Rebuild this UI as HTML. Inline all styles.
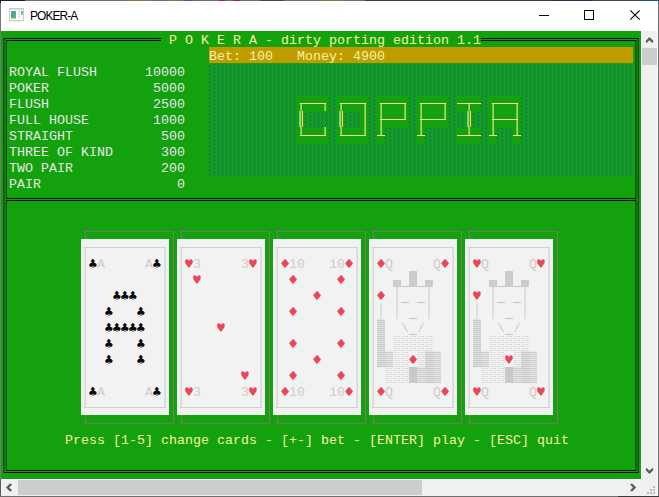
<!DOCTYPE html>
<html lang="en">
<head>
<meta charset="utf-8">
<title>POKER-A</title>
<style>
html,body{margin:0;padding:0;background:#fff;}
#win{position:relative;width:659px;height:497px;overflow:hidden;background:#fff;font-family:"Liberation Sans",sans-serif;}
#edgeL{position:absolute;left:0;top:0;width:1px;height:497px;background:linear-gradient(to bottom,#222 0,#222 3px,#7b747f 3px,#7b747f 479px,#5e5e62 479px);}
#edgeT{position:absolute;left:0;top:0;width:659px;height:1px;background:#707070;}
#edgeT i{position:absolute;top:0;height:1px;}
#edgeR{position:absolute;left:657px;top:1px;width:2px;height:496px;background:linear-gradient(to right,#fff 0,#fff 1px,#6a6a6a 1px);}
#edgeB{position:absolute;left:0;top:496px;width:659px;height:1px;background:linear-gradient(to right,#707070 0,#707070 618px,#3a3a3a 618px);}
#title{position:absolute;left:30px;top:9px;font-size:12px;line-height:14px;letter-spacing:-0.95px;color:#000;white-space:pre;}
#con{position:absolute;left:1px;top:31px;width:640px;height:448px;background:#13A10E;overflow:hidden;font-family:"Liberation Mono",monospace;font-size:13.33px;line-height:16px;}
#con svg{position:absolute;left:0;top:0;}
.t,.s{position:absolute;white-space:pre;height:16px;line-height:16px;margin-top:1.5px;}
.s{font-family:"DejaVu Sans Mono","DejaVu Sans",monospace;font-size:13px;width:8px;text-align:center;transform-origin:4px 11.5px;}
.c{transform:scale(1,1.13);}
.h{transform:scale(1,1.13);}
.d{transform:scale(1.3,1.18);}
#vs{position:absolute;left:641px;top:31px;width:17px;height:448px;background:#F0F0F0;box-shadow:inset 1px 0 0 #fff;}
#vs i{position:absolute;left:1px;top:17px;width:15px;height:17px;background:#CDCDCD;}
#hs{position:absolute;left:1px;top:479px;width:640px;height:17px;background:#F0F0F0;box-shadow:inset 0 1px 0 #fff;}
#hs i{position:absolute;left:17px;top:1px;width:404px;height:15px;background:#CDCDCD;}
#grip{position:absolute;left:641px;top:479px;width:17px;height:17px;background:#F0F0F0;}
.ic{position:absolute;left:0;top:0;}
</style>
</head>
<body>
<div id="win">
<div id="title">POKER-A</div>
<svg class="ic" width="659" height="497" viewBox="0 0 659 497">
<defs><linearGradient id="ig" x1="0" y1="0" x2="0.35" y2="1"><stop offset="0" stop-color="#6392C8"/><stop offset="1" stop-color="#55B864"/></linearGradient>
<linearGradient id="ig2" x1="0" y1="0" x2="0" y2="1"><stop offset="0" stop-color="#6C9ACB"/><stop offset="0.7" stop-color="#7CC88A"/><stop offset="1" stop-color="#D8EEDA"/></linearGradient></defs>
<rect x="9.5" y="8.5" width="14" height="12" fill="#fff" stroke="#C9CCD3"/>
<rect x="10" y="9" width="13" height="1" fill="#DCDEE3"/>
<rect x="9" y="21" width="15" height="1" fill="#EEEFF1"/>
<rect x="11" y="11" width="5" height="7.5" fill="url(#ig)"/>
<rect x="18" y="11" width="2" height="7.5" fill="#E4E4E6"/>
<rect x="21" y="11" width="2" height="4.5" fill="url(#ig2)"/>
<rect x="539" y="15" width="10" height="1" fill="#000"/>
<rect x="584.5" y="10.5" width="9" height="9" fill="none" stroke="#000"/>
<path d="M630.3 10.3 L639.7 19.7 M639.7 10.3 L630.3 19.7" stroke="#000" stroke-width="1.1" fill="none"/>
</svg>
<div id="con">
<svg width="640" height="448" viewBox="0 0 640 448" shape-rendering="crispEdges">
<defs><pattern id="dotb" width="8" height="4" patternUnits="userSpaceOnUse"><rect x="1" y="1" width="1" height="1" fill="#1662B8"/><rect x="3" y="1" width="1" height="1" fill="#20A070"/><rect x="4" y="1" width="1" height="1" fill="#0F5E48"/><rect x="6" y="1" width="1" height="1" fill="#1866B2"/><rect x="0" y="3" width="1" height="1" fill="#0F5E50"/><rect x="2" y="3" width="1" height="1" fill="#1868BA"/><rect x="5" y="3" width="1" height="1" fill="#1662B2"/><rect x="7" y="3" width="1" height="1" fill="#20A070"/></pattern><pattern id="sh1" width="8" height="4" patternUnits="userSpaceOnUse"><rect x="1" y="1" width="1" height="1" fill="#D3D3D8"/><rect x="2" y="1" width="1" height="1" fill="#EAEAEA"/><rect x="3" y="1" width="1" height="1" fill="#DEDEE0"/><rect x="4" y="1" width="1" height="1" fill="#DEDEE0"/><rect x="5" y="1" width="1" height="1" fill="#EAEAEA"/><rect x="6" y="1" width="1" height="1" fill="#D3D3D8"/><rect x="0" y="3" width="1" height="1" fill="#DEDEE0"/><rect x="1" y="3" width="1" height="1" fill="#EAEAEA"/><rect x="2" y="3" width="1" height="1" fill="#D3D3D8"/><rect x="3" y="3" width="1" height="1" fill="#EAEAEA"/><rect x="4" y="3" width="1" height="1" fill="#EAEAEA"/><rect x="5" y="3" width="1" height="1" fill="#D3D3D8"/><rect x="6" y="3" width="1" height="1" fill="#EAEAEA"/><rect x="7" y="3" width="1" height="1" fill="#DEDEE0"/></pattern><pattern id="sh2" width="8" height="2" patternUnits="userSpaceOnUse"><rect x="0" y="0" width="8" height="1" fill="#E8E8E8"/><rect x="0" y="1" width="8" height="1" fill="#CBCBCF"/></pattern><pattern id="sh3" width="8" height="2" patternUnits="userSpaceOnUse"><rect x="0" y="0" width="8" height="1" fill="#E3E3E3"/><rect x="0" y="1" width="8" height="1" fill="#C6C6CA"/></pattern></defs>
<rect x="2" y="7" width="1" height="435" fill="#105F10"/>
<rect x="634" y="9" width="1" height="431" fill="#105F10"/>
<rect x="3" y="7" width="1" height="435" fill="#126C12"/>
<rect x="635" y="9" width="1" height="431" fill="#126C12"/>
<rect x="4" y="9" width="1" height="431" fill="#147A14"/>
<rect x="636" y="7" width="1" height="435" fill="#147A14"/>
<rect x="5" y="9" width="1" height="431" fill="#0F4812"/>
<rect x="637" y="7" width="1" height="435" fill="#0F4812"/>
<rect x="3" y="7" width="157" height="1" fill="#0C0C0C"/>
<rect x="5" y="9" width="155" height="1" fill="#0C0C0C"/>
<rect x="480" y="7" width="157" height="1" fill="#0C0C0C"/>
<rect x="480" y="9" width="155" height="1" fill="#0C0C0C"/>
<rect x="5" y="167" width="630" height="1" fill="#0C0C0C"/>
<rect x="5" y="169" width="630" height="1" fill="#0C0C0C"/>
<rect x="4" y="168" width="2" height="1" fill="#15931A"/>
<rect x="635" y="168" width="2" height="1" fill="#15931A"/>
<rect x="5" y="439" width="630" height="1" fill="#0C0C0C"/>
<rect x="3" y="441" width="634" height="1" fill="#0C0C0C"/>
<rect x="208" y="16" width="424" height="16" fill="#C19C00"/>
<rect x="208" y="32" width="424" height="112" fill="url(#dotb)"/>
<rect x="295" y="64" width="9" height="16" fill="#13A10E"/>
<rect x="303" y="64" width="9" height="16" fill="#13A10E"/>
<rect x="311" y="64" width="9" height="16" fill="#13A10E"/>
<rect x="319" y="64" width="9" height="16" fill="#13A10E"/>
<rect x="295" y="80" width="9" height="16" fill="#13A10E"/>
<rect x="295" y="96" width="9" height="16" fill="#13A10E"/>
<rect x="303" y="96" width="9" height="16" fill="#13A10E"/>
<rect x="311" y="96" width="9" height="16" fill="#13A10E"/>
<rect x="319" y="96" width="9" height="16" fill="#13A10E"/>
<rect x="335" y="64" width="9" height="16" fill="#13A10E"/>
<rect x="343" y="64" width="9" height="16" fill="#13A10E"/>
<rect x="351" y="64" width="9" height="16" fill="#13A10E"/>
<rect x="359" y="64" width="9" height="16" fill="#13A10E"/>
<rect x="335" y="80" width="9" height="16" fill="#13A10E"/>
<rect x="359" y="80" width="9" height="16" fill="#13A10E"/>
<rect x="335" y="96" width="9" height="16" fill="#13A10E"/>
<rect x="343" y="96" width="9" height="16" fill="#13A10E"/>
<rect x="351" y="96" width="9" height="16" fill="#13A10E"/>
<rect x="359" y="96" width="9" height="16" fill="#13A10E"/>
<rect x="375" y="64" width="9" height="16" fill="#13A10E"/>
<rect x="383" y="64" width="9" height="16" fill="#13A10E"/>
<rect x="391" y="64" width="9" height="16" fill="#13A10E"/>
<rect x="399" y="64" width="9" height="16" fill="#13A10E"/>
<rect x="375" y="80" width="9" height="16" fill="#13A10E"/>
<rect x="383" y="80" width="9" height="16" fill="#13A10E"/>
<rect x="391" y="80" width="9" height="16" fill="#13A10E"/>
<rect x="399" y="80" width="9" height="16" fill="#13A10E"/>
<rect x="375" y="96" width="9" height="16" fill="#13A10E"/>
<rect x="415" y="64" width="9" height="16" fill="#13A10E"/>
<rect x="423" y="64" width="9" height="16" fill="#13A10E"/>
<rect x="431" y="64" width="9" height="16" fill="#13A10E"/>
<rect x="439" y="64" width="9" height="16" fill="#13A10E"/>
<rect x="415" y="80" width="9" height="16" fill="#13A10E"/>
<rect x="423" y="80" width="9" height="16" fill="#13A10E"/>
<rect x="431" y="80" width="9" height="16" fill="#13A10E"/>
<rect x="439" y="80" width="9" height="16" fill="#13A10E"/>
<rect x="415" y="96" width="9" height="16" fill="#13A10E"/>
<rect x="455" y="64" width="9" height="16" fill="#13A10E"/>
<rect x="463" y="64" width="9" height="16" fill="#13A10E"/>
<rect x="471" y="64" width="9" height="16" fill="#13A10E"/>
<rect x="463" y="80" width="9" height="16" fill="#13A10E"/>
<rect x="455" y="96" width="9" height="16" fill="#13A10E"/>
<rect x="463" y="96" width="9" height="16" fill="#13A10E"/>
<rect x="471" y="96" width="9" height="16" fill="#13A10E"/>
<rect x="487" y="64" width="9" height="16" fill="#13A10E"/>
<rect x="495" y="64" width="9" height="16" fill="#13A10E"/>
<rect x="503" y="64" width="9" height="16" fill="#13A10E"/>
<rect x="511" y="64" width="9" height="16" fill="#13A10E"/>
<rect x="487" y="80" width="9" height="16" fill="#13A10E"/>
<rect x="495" y="80" width="9" height="16" fill="#13A10E"/>
<rect x="503" y="80" width="9" height="16" fill="#13A10E"/>
<rect x="511" y="80" width="9" height="16" fill="#13A10E"/>
<rect x="487" y="96" width="9" height="16" fill="#13A10E"/>
<rect x="511" y="96" width="9" height="16" fill="#13A10E"/>
<rect x="299" y="72" width="1" height="8" fill="#50C890"/>
<rect x="300" y="72" width="1" height="8" fill="#D8C830"/>
<rect x="299" y="72" width="5" height="1" fill="#F9F1A5"/>
<rect x="304" y="72" width="8" height="1" fill="#F9F1A5"/>
<rect x="312" y="72" width="8" height="1" fill="#F9F1A5"/>
<rect x="323" y="72" width="1" height="8" fill="#50C890"/>
<rect x="324" y="72" width="1" height="8" fill="#D8C830"/>
<rect x="320" y="72" width="5" height="1" fill="#F9F1A5"/>
<rect x="298" y="80" width="1" height="16" fill="#60D0A0"/>
<rect x="299" y="80" width="1" height="16" fill="#D8C838"/>
<rect x="300" y="80" width="1" height="16" fill="#20B070"/>
<rect x="301" y="80" width="1" height="16" fill="#FFD850"/>
<rect x="299" y="96" width="1" height="9" fill="#50C890"/>
<rect x="300" y="96" width="1" height="9" fill="#D8C830"/>
<rect x="299" y="104" width="5" height="1" fill="#F9F1A5"/>
<rect x="304" y="104" width="8" height="1" fill="#F9F1A5"/>
<rect x="312" y="104" width="8" height="1" fill="#F9F1A5"/>
<rect x="323" y="96" width="1" height="9" fill="#50C890"/>
<rect x="324" y="96" width="1" height="9" fill="#D8C830"/>
<rect x="320" y="104" width="5" height="1" fill="#F9F1A5"/>
<rect x="339" y="72" width="1" height="8" fill="#50C890"/>
<rect x="340" y="72" width="1" height="8" fill="#D8C830"/>
<rect x="339" y="72" width="5" height="1" fill="#F9F1A5"/>
<rect x="344" y="72" width="8" height="1" fill="#F9F1A5"/>
<rect x="352" y="72" width="8" height="1" fill="#F9F1A5"/>
<rect x="363" y="72" width="1" height="8" fill="#50C890"/>
<rect x="364" y="72" width="1" height="8" fill="#D8C830"/>
<rect x="360" y="72" width="5" height="1" fill="#F9F1A5"/>
<rect x="338" y="80" width="1" height="16" fill="#60D0A0"/>
<rect x="339" y="80" width="1" height="16" fill="#D8C838"/>
<rect x="340" y="80" width="1" height="16" fill="#20B070"/>
<rect x="341" y="80" width="1" height="16" fill="#FFD850"/>
<rect x="363" y="80" width="1" height="16" fill="#50C890"/>
<rect x="364" y="80" width="1" height="16" fill="#D8C830"/>
<rect x="339" y="96" width="1" height="9" fill="#50C890"/>
<rect x="340" y="96" width="1" height="9" fill="#D8C830"/>
<rect x="339" y="104" width="5" height="1" fill="#F9F1A5"/>
<rect x="344" y="104" width="8" height="1" fill="#F9F1A5"/>
<rect x="352" y="104" width="8" height="1" fill="#F9F1A5"/>
<rect x="363" y="96" width="1" height="9" fill="#50C890"/>
<rect x="364" y="96" width="1" height="9" fill="#D8C830"/>
<rect x="360" y="104" width="5" height="1" fill="#F9F1A5"/>
<rect x="379" y="72" width="1" height="8" fill="#50C890"/>
<rect x="380" y="72" width="1" height="8" fill="#D8C830"/>
<rect x="379" y="72" width="5" height="1" fill="#F9F1A5"/>
<rect x="384" y="72" width="8" height="1" fill="#F9F1A5"/>
<rect x="392" y="72" width="8" height="1" fill="#F9F1A5"/>
<rect x="403" y="72" width="1" height="8" fill="#50C890"/>
<rect x="404" y="72" width="1" height="8" fill="#D8C830"/>
<rect x="400" y="72" width="5" height="1" fill="#F9F1A5"/>
<rect x="379" y="80" width="1" height="16" fill="#50C890"/>
<rect x="380" y="80" width="1" height="16" fill="#D8C830"/>
<rect x="379" y="88" width="5" height="1" fill="#F9F1A5"/>
<rect x="384" y="88" width="8" height="1" fill="#F9F1A5"/>
<rect x="392" y="88" width="8" height="1" fill="#F9F1A5"/>
<rect x="403" y="80" width="1" height="9" fill="#50C890"/>
<rect x="404" y="80" width="1" height="9" fill="#D8C830"/>
<rect x="400" y="88" width="5" height="1" fill="#F9F1A5"/>
<rect x="379" y="96" width="1" height="9" fill="#50C890"/>
<rect x="380" y="96" width="1" height="9" fill="#D8C830"/>
<rect x="376" y="104" width="8" height="1" fill="#F9F1A5"/>
<rect x="419" y="72" width="1" height="8" fill="#50C890"/>
<rect x="420" y="72" width="1" height="8" fill="#D8C830"/>
<rect x="419" y="72" width="5" height="1" fill="#F9F1A5"/>
<rect x="424" y="72" width="8" height="1" fill="#F9F1A5"/>
<rect x="432" y="72" width="8" height="1" fill="#F9F1A5"/>
<rect x="443" y="72" width="1" height="8" fill="#50C890"/>
<rect x="444" y="72" width="1" height="8" fill="#D8C830"/>
<rect x="440" y="72" width="5" height="1" fill="#F9F1A5"/>
<rect x="419" y="80" width="1" height="16" fill="#50C890"/>
<rect x="420" y="80" width="1" height="16" fill="#D8C830"/>
<rect x="419" y="88" width="5" height="1" fill="#F9F1A5"/>
<rect x="424" y="88" width="8" height="1" fill="#F9F1A5"/>
<rect x="432" y="88" width="8" height="1" fill="#F9F1A5"/>
<rect x="443" y="80" width="1" height="9" fill="#50C890"/>
<rect x="444" y="80" width="1" height="9" fill="#D8C830"/>
<rect x="440" y="88" width="5" height="1" fill="#F9F1A5"/>
<rect x="419" y="96" width="1" height="9" fill="#50C890"/>
<rect x="420" y="96" width="1" height="9" fill="#D8C830"/>
<rect x="416" y="104" width="8" height="1" fill="#F9F1A5"/>
<rect x="456" y="72" width="8" height="1" fill="#F9F1A5"/>
<rect x="467" y="72" width="1" height="8" fill="#50C890"/>
<rect x="468" y="72" width="1" height="8" fill="#D8C830"/>
<rect x="464" y="72" width="8" height="1" fill="#F9F1A5"/>
<rect x="472" y="72" width="8" height="1" fill="#F9F1A5"/>
<rect x="466" y="80" width="1" height="16" fill="#60D0A0"/>
<rect x="467" y="80" width="1" height="16" fill="#D8C838"/>
<rect x="468" y="80" width="1" height="16" fill="#20B070"/>
<rect x="469" y="80" width="1" height="16" fill="#FFD850"/>
<rect x="456" y="104" width="8" height="1" fill="#F9F1A5"/>
<rect x="467" y="96" width="1" height="9" fill="#50C890"/>
<rect x="468" y="96" width="1" height="9" fill="#D8C830"/>
<rect x="464" y="104" width="8" height="1" fill="#F9F1A5"/>
<rect x="472" y="104" width="8" height="1" fill="#F9F1A5"/>
<rect x="491" y="72" width="1" height="8" fill="#50C890"/>
<rect x="492" y="72" width="1" height="8" fill="#D8C830"/>
<rect x="491" y="72" width="5" height="1" fill="#F9F1A5"/>
<rect x="496" y="72" width="8" height="1" fill="#F9F1A5"/>
<rect x="504" y="72" width="8" height="1" fill="#F9F1A5"/>
<rect x="515" y="72" width="1" height="8" fill="#50C890"/>
<rect x="516" y="72" width="1" height="8" fill="#D8C830"/>
<rect x="512" y="72" width="5" height="1" fill="#F9F1A5"/>
<rect x="491" y="80" width="1" height="16" fill="#50C890"/>
<rect x="492" y="80" width="1" height="16" fill="#D8C830"/>
<rect x="491" y="88" width="5" height="1" fill="#F9F1A5"/>
<rect x="496" y="88" width="8" height="1" fill="#F9F1A5"/>
<rect x="504" y="88" width="8" height="1" fill="#F9F1A5"/>
<rect x="515" y="80" width="1" height="16" fill="#50C890"/>
<rect x="516" y="80" width="1" height="16" fill="#D8C830"/>
<rect x="512" y="88" width="5" height="1" fill="#F9F1A5"/>
<rect x="491" y="96" width="1" height="9" fill="#50C890"/>
<rect x="492" y="96" width="1" height="9" fill="#D8C830"/>
<rect x="488" y="104" width="8" height="1" fill="#F9F1A5"/>
<rect x="515" y="96" width="1" height="9" fill="#50C890"/>
<rect x="516" y="96" width="1" height="9" fill="#D8C830"/>
<rect x="512" y="104" width="8" height="1" fill="#F9F1A5"/>
<rect x="83" y="200" width="1" height="193" fill="#2C8A62"/>
<rect x="84" y="200" width="1" height="193" fill="#708A24"/>
<rect x="171" y="200" width="1" height="193" fill="#2C8A62"/>
<rect x="172" y="200" width="1" height="193" fill="#708A24"/>
<rect x="83" y="200" width="90" height="1" fill="#767676" fill-opacity="0.9"/>
<rect x="83" y="392" width="90" height="1" fill="#767676" fill-opacity="0.9"/>
<rect x="80" y="208" width="88" height="176" fill="#F2F2F2"/>
<rect x="83" y="216" width="1" height="161" fill="#F0E0D4"/>
<rect x="84" y="216" width="1" height="161" fill="#CCDCEC"/>
<rect x="163" y="216" width="1" height="161" fill="#F0E0D4"/>
<rect x="164" y="216" width="1" height="161" fill="#CCDCEC"/>
<rect x="83" y="216" width="82" height="1" fill="#CFCFCF"/>
<rect x="83" y="376" width="82" height="1" fill="#CFCFCF"/>
<rect x="179" y="200" width="1" height="193" fill="#2C8A62"/>
<rect x="180" y="200" width="1" height="193" fill="#708A24"/>
<rect x="267" y="200" width="1" height="193" fill="#2C8A62"/>
<rect x="268" y="200" width="1" height="193" fill="#708A24"/>
<rect x="179" y="200" width="90" height="1" fill="#767676" fill-opacity="0.9"/>
<rect x="179" y="392" width="90" height="1" fill="#767676" fill-opacity="0.9"/>
<rect x="176" y="208" width="88" height="176" fill="#F2F2F2"/>
<rect x="179" y="216" width="1" height="161" fill="#F0E0D4"/>
<rect x="180" y="216" width="1" height="161" fill="#CCDCEC"/>
<rect x="259" y="216" width="1" height="161" fill="#F0E0D4"/>
<rect x="260" y="216" width="1" height="161" fill="#CCDCEC"/>
<rect x="179" y="216" width="82" height="1" fill="#CFCFCF"/>
<rect x="179" y="376" width="82" height="1" fill="#CFCFCF"/>
<rect x="275" y="200" width="1" height="193" fill="#2C8A62"/>
<rect x="276" y="200" width="1" height="193" fill="#708A24"/>
<rect x="363" y="200" width="1" height="193" fill="#2C8A62"/>
<rect x="364" y="200" width="1" height="193" fill="#708A24"/>
<rect x="275" y="200" width="90" height="1" fill="#767676" fill-opacity="0.9"/>
<rect x="275" y="392" width="90" height="1" fill="#767676" fill-opacity="0.9"/>
<rect x="272" y="208" width="88" height="176" fill="#F2F2F2"/>
<rect x="275" y="216" width="1" height="161" fill="#F0E0D4"/>
<rect x="276" y="216" width="1" height="161" fill="#CCDCEC"/>
<rect x="355" y="216" width="1" height="161" fill="#F0E0D4"/>
<rect x="356" y="216" width="1" height="161" fill="#CCDCEC"/>
<rect x="275" y="216" width="82" height="1" fill="#CFCFCF"/>
<rect x="275" y="376" width="82" height="1" fill="#CFCFCF"/>
<rect x="371" y="200" width="1" height="193" fill="#2C8A62"/>
<rect x="372" y="200" width="1" height="193" fill="#708A24"/>
<rect x="459" y="200" width="1" height="193" fill="#2C8A62"/>
<rect x="460" y="200" width="1" height="193" fill="#708A24"/>
<rect x="371" y="200" width="90" height="1" fill="#767676" fill-opacity="0.9"/>
<rect x="371" y="392" width="90" height="1" fill="#767676" fill-opacity="0.9"/>
<rect x="368" y="208" width="88" height="176" fill="#F2F2F2"/>
<rect x="371" y="216" width="1" height="161" fill="#F0E0D4"/>
<rect x="372" y="216" width="1" height="161" fill="#CCDCEC"/>
<rect x="451" y="216" width="1" height="161" fill="#F0E0D4"/>
<rect x="452" y="216" width="1" height="161" fill="#CCDCEC"/>
<rect x="371" y="216" width="82" height="1" fill="#CFCFCF"/>
<rect x="371" y="376" width="82" height="1" fill="#CFCFCF"/>
<rect x="392" y="249" width="8" height="7" fill="#CCCCCC"/>
<rect x="408" y="240" width="8" height="16" fill="#CCCCCC"/>
<rect x="424" y="249" width="8" height="7" fill="#CCCCCC"/>
<rect x="395" y="256" width="1" height="16" fill="#F0E0D4"/>
<rect x="396" y="256" width="1" height="16" fill="#CCDCEC"/>
<rect x="427" y="256" width="1" height="16" fill="#F0E0D4"/>
<rect x="428" y="256" width="1" height="16" fill="#CCDCEC"/>
<rect x="379" y="272" width="1" height="16" fill="#F0E0D4"/>
<rect x="380" y="272" width="1" height="16" fill="#CCDCEC"/>
<rect x="395" y="272" width="1" height="16" fill="#F0E0D4"/>
<rect x="396" y="272" width="1" height="16" fill="#CCDCEC"/>
<rect x="427" y="272" width="1" height="16" fill="#F0E0D4"/>
<rect x="428" y="272" width="1" height="16" fill="#CCDCEC"/>
<rect x="376" y="288" width="8" height="16" fill="url(#sh3)"/>
<rect x="376" y="304" width="8" height="16" fill="url(#sh3)"/>
<rect x="376" y="320" width="8" height="16" fill="url(#sh3)"/>
<rect x="392" y="304" width="8" height="16" fill="url(#sh1)"/>
<rect x="400" y="304" width="8" height="16" fill="url(#sh1)"/>
<rect x="408" y="304" width="8" height="16" fill="url(#sh1)"/>
<rect x="416" y="304" width="8" height="16" fill="url(#sh1)"/>
<rect x="424" y="304" width="8" height="16" fill="url(#sh1)"/>
<rect x="384" y="320" width="8" height="16" fill="url(#sh2)"/>
<rect x="392" y="320" width="8" height="16" fill="url(#sh1)"/>
<rect x="400" y="320" width="8" height="16" fill="url(#sh1)"/>
<rect x="416" y="320" width="8" height="16" fill="url(#sh1)"/>
<rect x="424" y="320" width="8" height="16" fill="url(#sh3)"/>
<rect x="432" y="320" width="8" height="16" fill="url(#sh2)"/>
<rect x="384" y="336" width="8" height="16" fill="url(#sh1)"/>
<rect x="392" y="336" width="8" height="16" fill="url(#sh1)"/>
<rect x="400" y="336" width="8" height="16" fill="url(#sh1)"/>
<rect x="408" y="336" width="8" height="16" fill="#C9C9C9"/>
<rect x="416" y="336" width="8" height="16" fill="url(#sh2)"/>
<rect x="424" y="336" width="8" height="16" fill="url(#sh3)"/>
<rect x="432" y="336" width="8" height="16" fill="url(#sh2)"/>
<rect x="467" y="200" width="1" height="193" fill="#2C8A62"/>
<rect x="468" y="200" width="1" height="193" fill="#708A24"/>
<rect x="555" y="200" width="1" height="193" fill="#2C8A62"/>
<rect x="556" y="200" width="1" height="193" fill="#708A24"/>
<rect x="467" y="200" width="90" height="1" fill="#767676" fill-opacity="0.9"/>
<rect x="467" y="392" width="90" height="1" fill="#767676" fill-opacity="0.9"/>
<rect x="464" y="208" width="88" height="176" fill="#F2F2F2"/>
<rect x="467" y="216" width="1" height="161" fill="#F0E0D4"/>
<rect x="468" y="216" width="1" height="161" fill="#CCDCEC"/>
<rect x="547" y="216" width="1" height="161" fill="#F0E0D4"/>
<rect x="548" y="216" width="1" height="161" fill="#CCDCEC"/>
<rect x="467" y="216" width="82" height="1" fill="#CFCFCF"/>
<rect x="467" y="376" width="82" height="1" fill="#CFCFCF"/>
<rect x="488" y="249" width="8" height="7" fill="#CCCCCC"/>
<rect x="504" y="240" width="8" height="16" fill="#CCCCCC"/>
<rect x="520" y="249" width="8" height="7" fill="#CCCCCC"/>
<rect x="491" y="256" width="1" height="16" fill="#F0E0D4"/>
<rect x="492" y="256" width="1" height="16" fill="#CCDCEC"/>
<rect x="523" y="256" width="1" height="16" fill="#F0E0D4"/>
<rect x="524" y="256" width="1" height="16" fill="#CCDCEC"/>
<rect x="475" y="272" width="1" height="16" fill="#F0E0D4"/>
<rect x="476" y="272" width="1" height="16" fill="#CCDCEC"/>
<rect x="491" y="272" width="1" height="16" fill="#F0E0D4"/>
<rect x="492" y="272" width="1" height="16" fill="#CCDCEC"/>
<rect x="523" y="272" width="1" height="16" fill="#F0E0D4"/>
<rect x="524" y="272" width="1" height="16" fill="#CCDCEC"/>
<rect x="472" y="288" width="8" height="16" fill="url(#sh3)"/>
<rect x="472" y="304" width="8" height="16" fill="url(#sh3)"/>
<rect x="472" y="320" width="8" height="16" fill="url(#sh3)"/>
<rect x="488" y="304" width="8" height="16" fill="url(#sh1)"/>
<rect x="496" y="304" width="8" height="16" fill="url(#sh1)"/>
<rect x="504" y="304" width="8" height="16" fill="url(#sh1)"/>
<rect x="512" y="304" width="8" height="16" fill="url(#sh1)"/>
<rect x="520" y="304" width="8" height="16" fill="url(#sh1)"/>
<rect x="480" y="320" width="8" height="16" fill="url(#sh2)"/>
<rect x="488" y="320" width="8" height="16" fill="url(#sh1)"/>
<rect x="496" y="320" width="8" height="16" fill="url(#sh1)"/>
<rect x="512" y="320" width="8" height="16" fill="url(#sh1)"/>
<rect x="520" y="320" width="8" height="16" fill="url(#sh3)"/>
<rect x="528" y="320" width="8" height="16" fill="url(#sh2)"/>
<rect x="480" y="336" width="8" height="16" fill="url(#sh1)"/>
<rect x="488" y="336" width="8" height="16" fill="url(#sh1)"/>
<rect x="496" y="336" width="8" height="16" fill="url(#sh1)"/>
<rect x="504" y="336" width="8" height="16" fill="#C9C9C9"/>
<rect x="512" y="336" width="8" height="16" fill="url(#sh2)"/>
<rect x="520" y="336" width="8" height="16" fill="url(#sh3)"/>
<rect x="528" y="336" width="8" height="16" fill="url(#sh2)"/>
</svg>
<span class="t" style="left:8px;top:32px;color:#E8E8E8">ROYAL FLUSH      10000</span>
<span class="t" style="left:8px;top:48px;color:#E8E8E8">POKER             5000</span>
<span class="t" style="left:8px;top:64px;color:#E8E8E8">FLUSH             2500</span>
<span class="t" style="left:8px;top:80px;color:#E8E8E8">FULL HOUSE        1000</span>
<span class="t" style="left:8px;top:96px;color:#E8E8E8">STRAIGHT           500</span>
<span class="t" style="left:8px;top:112px;color:#E8E8E8">THREE OF KIND      300</span>
<span class="t" style="left:8px;top:128px;color:#E8E8E8">TWO PAIR           200</span>
<span class="t" style="left:8px;top:144px;color:#E8E8E8">PAIR                 0</span>
<span class="t" style="left:160px;top:0px;color:#F9F1A5"> P O K E R A - dirty porting edition 1.1</span>
<span class="t" style="left:208px;top:16px;color:#F9F1A5">Bet: 100   Money: 4900</span>
<span class="t" style="left:64px;top:400px;color:#F9F1A5">Press [1-5] change cards - [+-] bet - [ENTER] play - [ESC] quit</span>
<span class="s c" style="left:88px;top:224px;color:#0C0C0C">♣</span>
<span class="t" style="left:96px;top:224px;color:#CCCCCC">A</span>
<span class="t" style="left:144px;top:224px;color:#CCCCCC">A</span>
<span class="s c" style="left:152px;top:224px;color:#0C0C0C">♣</span>
<span class="s c" style="left:88px;top:352px;color:#0C0C0C">♣</span>
<span class="t" style="left:96px;top:352px;color:#CCCCCC">A</span>
<span class="t" style="left:144px;top:352px;color:#CCCCCC">A</span>
<span class="s c" style="left:152px;top:352px;color:#0C0C0C">♣</span>
<span class="s c" style="left:112px;top:256px;color:#0C0C0C">♣</span>
<span class="s c" style="left:120px;top:256px;color:#0C0C0C">♣</span>
<span class="s c" style="left:128px;top:256px;color:#0C0C0C">♣</span>
<span class="s c" style="left:104px;top:272px;color:#0C0C0C">♣</span>
<span class="s c" style="left:136px;top:272px;color:#0C0C0C">♣</span>
<span class="s c" style="left:104px;top:288px;color:#0C0C0C">♣</span>
<span class="s c" style="left:112px;top:288px;color:#0C0C0C">♣</span>
<span class="s c" style="left:120px;top:288px;color:#0C0C0C">♣</span>
<span class="s c" style="left:128px;top:288px;color:#0C0C0C">♣</span>
<span class="s c" style="left:136px;top:288px;color:#0C0C0C">♣</span>
<span class="s c" style="left:104px;top:304px;color:#0C0C0C">♣</span>
<span class="s c" style="left:136px;top:304px;color:#0C0C0C">♣</span>
<span class="s c" style="left:104px;top:320px;color:#0C0C0C">♣</span>
<span class="s c" style="left:136px;top:320px;color:#0C0C0C">♣</span>
<span class="s h" style="left:184px;top:224px;color:#E74856">♥</span>
<span class="t" style="left:192px;top:224px;color:#CCCCCC">3</span>
<span class="t" style="left:240px;top:224px;color:#CCCCCC">3</span>
<span class="s h" style="left:248px;top:224px;color:#E74856">♥</span>
<span class="s h" style="left:184px;top:352px;color:#E74856">♥</span>
<span class="t" style="left:192px;top:352px;color:#CCCCCC">3</span>
<span class="t" style="left:240px;top:352px;color:#CCCCCC">3</span>
<span class="s h" style="left:248px;top:352px;color:#E74856">♥</span>
<span class="s h" style="left:192px;top:240px;color:#E74856">♥</span>
<span class="s h" style="left:216px;top:288px;color:#E74856">♥</span>
<span class="s h" style="left:240px;top:336px;color:#E74856">♥</span>
<span class="s d" style="left:280px;top:224px;color:#E74856">♦</span>
<span class="t" style="left:288px;top:224px;color:#CCCCCC">10</span>
<span class="t" style="left:328px;top:224px;color:#CCCCCC">10</span>
<span class="s d" style="left:344px;top:224px;color:#E74856">♦</span>
<span class="s d" style="left:280px;top:352px;color:#E74856">♦</span>
<span class="t" style="left:288px;top:352px;color:#CCCCCC">10</span>
<span class="t" style="left:328px;top:352px;color:#CCCCCC">10</span>
<span class="s d" style="left:344px;top:352px;color:#E74856">♦</span>
<span class="s d" style="left:288px;top:240px;color:#E74856">♦</span>
<span class="s d" style="left:336px;top:240px;color:#E74856">♦</span>
<span class="s d" style="left:312px;top:256px;color:#E74856">♦</span>
<span class="s d" style="left:288px;top:272px;color:#E74856">♦</span>
<span class="s d" style="left:336px;top:272px;color:#E74856">♦</span>
<span class="s d" style="left:288px;top:304px;color:#E74856">♦</span>
<span class="s d" style="left:336px;top:304px;color:#E74856">♦</span>
<span class="s d" style="left:312px;top:320px;color:#E74856">♦</span>
<span class="s d" style="left:288px;top:336px;color:#E74856">♦</span>
<span class="s d" style="left:336px;top:336px;color:#E74856">♦</span>
<span class="s d" style="left:376px;top:224px;color:#E74856">♦</span>
<span class="t" style="left:384px;top:224px;color:#CCCCCC">Q</span>
<span class="t" style="left:432px;top:224px;color:#CCCCCC">Q</span>
<span class="s d" style="left:440px;top:224px;color:#E74856">♦</span>
<span class="s d" style="left:376px;top:352px;color:#E74856">♦</span>
<span class="t" style="left:384px;top:352px;color:#CCCCCC">Q</span>
<span class="t" style="left:432px;top:352px;color:#CCCCCC">Q</span>
<span class="s d" style="left:440px;top:352px;color:#E74856">♦</span>
<span class="t" style="left:400px;top:241px;color:#A2A2A6">_</span>
<span class="t" style="left:416px;top:241px;color:#A2A2A6">_</span>
<span class="s d" style="left:376px;top:256px;color:#E74856">♦</span>
<span class="t" style="left:400px;top:257px;color:#A2A2A6">_</span>
<span class="t" style="left:416px;top:257px;color:#A2A2A6">_</span>
<span class="t" style="left:408px;top:273px;color:#A2A2A6">_</span>
<span class="t" style="left:400px;top:288px;color:#CCCCCC">\</span>
<span class="t" style="left:408px;top:289px;color:#A2A2A6">_</span>
<span class="t" style="left:416px;top:288px;color:#CCCCCC">/</span>
<span class="s d" style="left:408px;top:320px;color:#E74856">♦</span>
<span class="s h" style="left:472px;top:224px;color:#E74856">♥</span>
<span class="t" style="left:480px;top:224px;color:#CCCCCC">Q</span>
<span class="t" style="left:528px;top:224px;color:#CCCCCC">Q</span>
<span class="s h" style="left:536px;top:224px;color:#E74856">♥</span>
<span class="s h" style="left:472px;top:352px;color:#E74856">♥</span>
<span class="t" style="left:480px;top:352px;color:#CCCCCC">Q</span>
<span class="t" style="left:528px;top:352px;color:#CCCCCC">Q</span>
<span class="s h" style="left:536px;top:352px;color:#E74856">♥</span>
<span class="t" style="left:496px;top:241px;color:#A2A2A6">_</span>
<span class="t" style="left:512px;top:241px;color:#A2A2A6">_</span>
<span class="s h" style="left:472px;top:256px;color:#E74856">♥</span>
<span class="t" style="left:496px;top:257px;color:#A2A2A6">_</span>
<span class="t" style="left:512px;top:257px;color:#A2A2A6">_</span>
<span class="t" style="left:504px;top:273px;color:#A2A2A6">_</span>
<span class="t" style="left:496px;top:288px;color:#CCCCCC">\</span>
<span class="t" style="left:504px;top:289px;color:#A2A2A6">_</span>
<span class="t" style="left:512px;top:288px;color:#CCCCCC">/</span>
<span class="s h" style="left:504px;top:320px;color:#E74856">♥</span>
</div>
<div id="vs"><i></i></div>
<div id="hs"><i></i></div>
<div id="grip"></div>
<svg class="ic" width="659" height="497" viewBox="0 0 659 497">
<g fill="#5A5A5A" shape-rendering="geometricPrecision">
<path d="M649.5 37 L653.2 40.7 L653.2 42.2 L652.3 43 L649.5 40.2 L646.7 43 L645.8 42.2 L645.8 40.7 Z"/>
<path d="M649.5 474 L653.2 470.3 L653.2 468.8 L652.3 468 L649.5 470.8 L646.7 468 L645.8 468.8 L645.8 470.3 Z"/>
<path d="M6 487.5 L9.7 491.2 L11.2 491.2 L12 490.3 L9.2 487.5 L12 484.7 L11.2 483.8 L9.7 483.8 Z"/>
<path d="M636.2 487.5 L632.5 491.2 L631 491.2 L630.2 490.3 L633 487.5 L630.2 484.7 L631 483.8 L632.5 483.8 Z"/>
</g>
<g fill="#BFBFBF">
<rect x="653" y="486" width="2" height="2"/>
<rect x="650" y="489" width="2" height="2"/><rect x="653" y="489" width="2" height="2"/>
<rect x="647" y="492" width="2" height="2"/><rect x="650" y="492" width="2" height="2"/><rect x="653" y="492" width="2" height="2"/>
</g>
</svg>
<div id="edgeT"><i style="left:0px;width:25px;background:#1c1c1c"></i><i style="left:127px;width:21px;background:#8a7a30"></i><i style="left:169px;width:8px;background:#8a7a30"></i><i style="left:184px;width:9px;background:#3a60a8"></i><i style="left:219px;width:6px;background:#a02828"></i><i style="left:233px;width:7px;background:#a02828"></i><i style="left:260px;width:24px;background:#484848"></i><i style="left:325px;width:17px;background:#8a7a30"></i><i style="left:365px;width:185px;background:#3c3c3c"></i><i style="left:550px;width:42px;background:#26344e"></i><i style="left:592px;width:49px;background:#4a4a4a"></i><i style="left:641px;width:18px;background:#2c4c8c"></i></div><div id="edgeL"></div><div id="edgeR"></div><div id="edgeB"></div>
</div>
</body>
</html>
